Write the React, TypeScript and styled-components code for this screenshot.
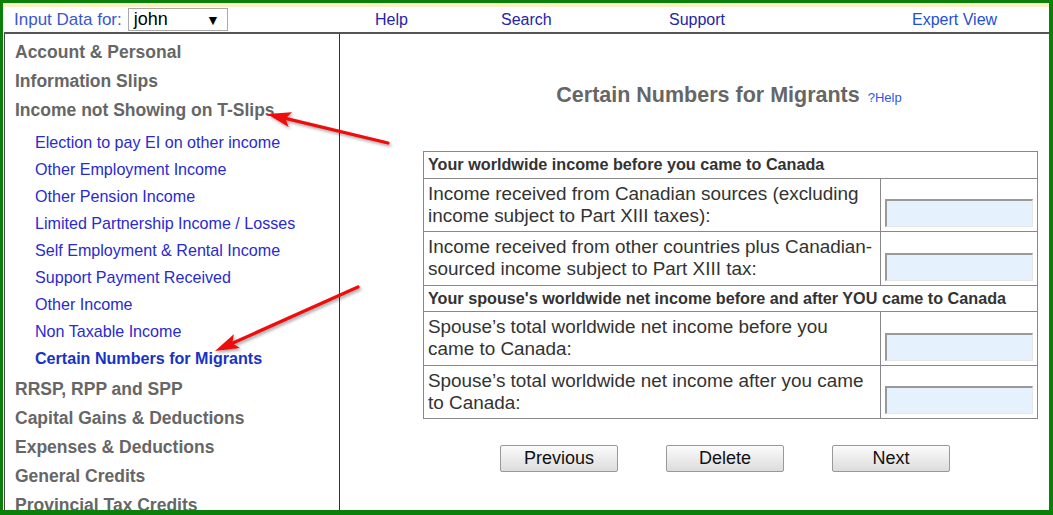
import React from "react";
import styled, { createGlobalStyle } from "styled-components";

const GlobalStyle = createGlobalStyle`
  body {
    margin: 0;
    background: white;
    font-family: "Liberation Sans", Arial, sans-serif;
  }
`;

//整体外框，绿色描边
const Frame = styled.div`
  position: relative;
  width: 1053px;
  height: 515px;
  box-sizing: border-box;
  border-style: solid;
  border-color: #0a7f0a;
  border-width: 3px 4px 5px 3px;
  overflow: hidden;
  display: flex;
  flex-direction: column;
  background: white;
`;

const Strip = styled.div`
  height: 4px;
  background: #faf0c2;
  flex: none;
`;

const TopBar = styled.div`
  height: 25px;
  flex: none;
  display: grid;
  grid-template-columns: 361px 126px 168px 243px auto;
  align-items: center;
  padding-left: 11px;
  font-size: 16px;
`;

const InputFor = styled.div`
  display: flex;
  align-items: center;
  gap: 6px;
  > .label {
    color: #3857d6;
    font-size: 17px;
  }
`;

const Select = styled.div`
  width: 100px;
  height: 23px;
  box-sizing: border-box;
  border: 1px solid #a9a9a9;
  display: flex;
  align-items: center;
  justify-content: space-between;
  padding: 0 7px 0 5px;
  font-size: 18px;
  color: #000;
  > .caret {
    font-size: 14px;
  }
`;

const NavLink = styled.a<{ $bright?: boolean }>`
  color: ${(p) => (p.$bright ? "#2150d6" : "#2424a8")};
  text-decoration: none;
  font-size: 16px;
`;

const Body = styled.div`
  flex: 1;
  display: flex;
  margin-left: 1px;
  border-top: 2px solid #555;
  min-height: 0;
`;

const Sidebar = styled.div`
  width: 336px;
  flex: none;
  box-sizing: border-box;
  border-left: 1px solid #444;
  border-right: 1px solid #333;
  padding: 4px 0 0 10px;
`;

const Section = styled.div`
  height: 29px;
  line-height: 29px;
  font-size: 17.5px;
  font-weight: bold;
  color: #666;
  white-space: nowrap;
`;

const SubList = styled.div`
  padding: 4px 0 3px 20px;
`;

const SubItem = styled.div<{ $active?: boolean }>`
  height: 27px;
  line-height: 27px;
  font-size: 16.1px;
  color: ${(p) => (p.$active ? "#1733c5" : "#2a2ad0")};
  font-weight: ${(p) => (p.$active ? "bold" : "normal")};
  white-space: nowrap;
`;

const Main = styled.div`
  flex: 1;
  padding: 48px 0 0 83px;
`;

const Content = styled.div`
  width: 615px;
`;

const Title = styled.h2`
  margin: 0;
  display: flex;
  justify-content: center;
  align-items: baseline;
  gap: 8px;
  padding-right: 3px;
  font-size: 21.5px;
  line-height: 26px;
  color: #666;
  > .help {
    font-size: 13px;
    font-weight: normal;
    color: #3355f0;
  }
`;

const Table = styled.table`
  margin-top: 40px;
  width: 615px;
  border-collapse: collapse;
  border: 1px solid #888;
  color: #333;
  td {
    border: 1px solid #888;
  }
`;

const HeadCell = styled.td`
  height: 25.5px;
  padding: 0 4px;
  font-size: 16.2px;
  font-weight: bold;
  white-space: nowrap;
`;

const LabelCell = styled.td`
  height: 52.5px;
  padding: 0 4px;
  font-size: 18.9px;
  line-height: 22px;
`;

const FieldCell = styled.td`
  vertical-align: bottom;
  padding: 0 4px 4px 4px;
`;

const Field = styled.div`
  width: 148px;
  height: 28px;
  box-sizing: border-box;
  background: #e5f2fd;
  border-style: solid;
  border-width: 2px 1px 1px 2px;
  border-color: #999 #e6e6e6 #e6e6e6 #999;
`;

const Buttons = styled.div`
  margin-top: 26px;
  padding-left: 77px;
  display: flex;
  gap: 48px;
`;

const Button = styled.button`
  width: 118px;
  height: 27px;
  border: 1px solid #999;
  border-radius: 2px;
  background: linear-gradient(#fbfbfb, #dcdcdc);
  font-family: "Liberation Sans", Arial, sans-serif;
  font-size: 18px;
  color: #111;
  padding: 0;
`;

const Overlay = styled.svg`
  position: absolute;
  left: -3px;
  top: -3px;
  width: 1053px;
  height: 515px;
  pointer-events: none;
`;

function Arrow(props: { x1: number; y1: number; x2: number; y2: number }) {
  const { x1, y1, x2, y2 } = props;
  const len = Math.hypot(x2 - x1, y2 - y1);
  const ux = (x2 - x1) / len;
  const uy = (y2 - y1) / len;
  const px = -uy;
  const py = ux;
  const head = 24;
  const half = 7.5;
  const bx = x2 - ux * head;
  const by = y2 - uy * head;
  const nx = x2 - ux * (head - 5);
  const ny = y2 - uy * (head - 5);
  const pts = [
    [x2, y2],
    [bx + px * half, by + py * half],
    [nx, ny],
    [bx - px * half, by - py * half],
  ]
    .map((p) => p.join(","))
    .join(" ");
  return (
    <g filter="url(#shadow)">
      <line x1={x1} y1={y1} x2={nx} y2={ny} stroke="#ee0a0a" strokeWidth={3.2} strokeLinecap="round" />
      <polygon points={pts} fill="#ee0a0a" />
    </g>
  );
}

const sections1 = ["Account & Personal", "Information Slips", "Income not Showing on T-Slips"];
const subItems = [
  "Election to pay EI on other income",
  "Other Employment Income",
  "Other Pension Income",
  "Limited Partnership Income / Losses",
  "Self Employment & Rental Income",
  "Support Payment Received",
  "Other Income",
  "Non Taxable Income",
  "Certain Numbers for Migrants",
];
const sections2 = [
  "RRSP, RPP and SPP",
  "Capital Gains & Deductions",
  "Expenses & Deductions",
  "General Credits",
  "Provincial Tax Credits",
];

function App() {
  return (
    <>
      <GlobalStyle />
      <Frame>
        <Strip />
        <TopBar>
          <InputFor>
            <span className="label">Input Data for:</span>
            <Select>
              <span>john</span>
              <span className="caret">▼</span>
            </Select>
          </InputFor>
          <NavLink>Help</NavLink>
          <NavLink>Search</NavLink>
          <NavLink>Support</NavLink>
          <NavLink $bright>Expert View</NavLink>
        </TopBar>
        <Body>
          <Sidebar>
            {sections1.map((s) => (
              <Section key={s}>{s}</Section>
            ))}
            <SubList>
              {subItems.map((s, i) => (
                <SubItem key={s} $active={i === subItems.length - 1}>
                  {s}
                </SubItem>
              ))}
            </SubList>
            {sections2.map((s) => (
              <Section key={s}>{s}</Section>
            ))}
          </Sidebar>
          <Main>
            <Content>
              <Title>
                Certain Numbers for Migrants <span className="help">?Help</span>
              </Title>
              <Table>
                <colgroup>
                  <col style={{ width: 458 }} />
                  <col style={{ width: 157 }} />
                </colgroup>
                <tbody>
                  <tr>
                    <HeadCell colSpan={2}>Your worldwide income before you came to Canada</HeadCell>
                  </tr>
                  <tr>
                    <LabelCell>
                      Income received from Canadian sources (excluding income subject to Part XIII taxes):
                    </LabelCell>
                    <FieldCell>
                      <Field />
                    </FieldCell>
                  </tr>
                  <tr>
                    <LabelCell>
                      Income received from other countries plus Canadian-sourced income subject to Part XIII tax:
                    </LabelCell>
                    <FieldCell>
                      <Field />
                    </FieldCell>
                  </tr>
                  <tr>
                    <HeadCell colSpan={2}>
                      Your spouse's worldwide net income before and after YOU came to Canada
                    </HeadCell>
                  </tr>
                  <tr>
                    <LabelCell>Spouse’s total worldwide net income before you came to Canada:</LabelCell>
                    <FieldCell>
                      <Field />
                    </FieldCell>
                  </tr>
                  <tr>
                    <LabelCell>Spouse’s total worldwide net income after you came to Canada:</LabelCell>
                    <FieldCell>
                      <Field />
                    </FieldCell>
                  </tr>
                </tbody>
              </Table>
              <Buttons>
                <Button>Previous</Button>
                <Button>Delete</Button>
                <Button>Next</Button>
              </Buttons>
            </Content>
          </Main>
        </Body>
        <Overlay viewBox="0 0 1053 515">
          <defs>
            <filter id="shadow" x="-20%" y="-20%" width="140%" height="140%">
              <feDropShadow dx="1.5" dy="2" stdDeviation="1.5" floodColor="#000" floodOpacity="0.35" />
            </filter>
          </defs>
          <Arrow x1={388} y1={143} x2={267} y2={114} />
          <Arrow x1={358} y1={287} x2={215} y2={351} />
        </Overlay>
      </Frame>
    </>
  );
}

export default App;
